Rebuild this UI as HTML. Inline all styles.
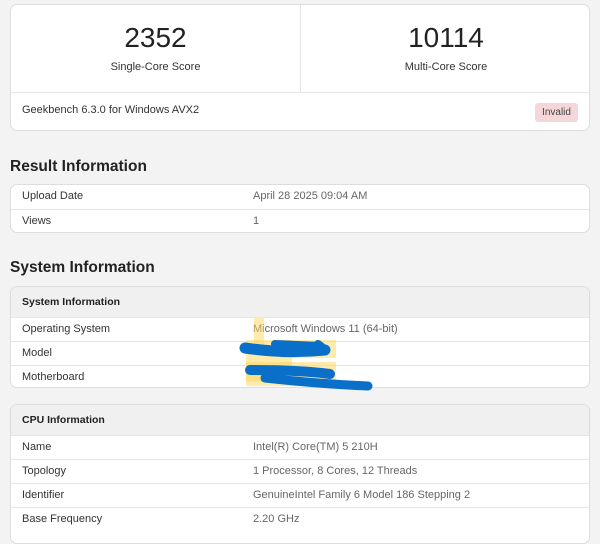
<html><head><style>
body{margin:0;width:600px;height:530px;background:#f3f3f3;font-family:"Liberation Sans",sans-serif;color:#222;position:relative;overflow:hidden}
.a{position:absolute}
.card{position:absolute;left:10px;width:580px;background:#fff;border:1px solid #ddd;border-radius:7px;box-sizing:border-box;overflow:hidden}
.row{position:absolute;left:0;width:100%;height:24px;border-top:1px solid #e6e6e6;font-size:11px;box-sizing:border-box}
.row .l{position:absolute;left:11px;top:5px;color:#333}
.row .v{position:absolute;left:242px;top:5px;color:#666}
.hd{position:absolute;left:0;top:0;width:100%;height:30px;background:#f0f0f0;font-size:10.5px;font-weight:bold}
.hd span{position:absolute;left:11px;top:9px}
h2{position:absolute;left:10px;margin:0;font-size:15.5px;font-weight:bold;color:#222}
</style></head><body>
<div class="card" style="top:4px;height:127px">
 <div class="a" style="left:289px;top:0;width:1px;height:87px;background:#e6e6e6"></div>
 <div class="a" style="left:0;top:87px;width:100%;height:1px;background:#e6e6e6"></div>
 <div class="a" style="left:0;width:289px;top:17px;text-align:center;font-size:28px">2352</div>
 <div class="a" style="left:0;width:289px;top:56px;text-align:center;font-size:11px;color:#333">Single-Core Score</div>
 <div class="a" style="left:290px;width:290px;top:17px;text-align:center;font-size:28px">10114</div>
 <div class="a" style="left:290px;width:290px;top:56px;text-align:center;font-size:11px;color:#333">Multi-Core Score</div>
 <div class="a" style="left:11px;top:99px;font-size:11px;color:#333">Geekbench 6.3.0 for Windows AVX2</div>
 <div class="a" style="left:524px;top:98px;width:43px;height:19px;background:#f5d6d9;border-radius:3px;font-size:10px;color:#444;text-align:center;line-height:19px">Invalid</div>
</div>
<h2 style="top:158px">Result Information</h2>
<div class="card" style="top:184px;height:49px">
 <div class="row" style="top:0;border-top:none"><span class="l">Upload Date</span><span class="v">April 28 2025 09:04 AM</span></div>
 <div class="row" style="top:24px"><span class="l">Views</span><span class="v">1</span></div>
</div>
<h2 style="top:259px">System Information</h2>
<div class="card" style="top:286px;height:102px">
 <div class="hd"><span>System Information</span></div>
 <div class="row" style="top:30px"><span class="l">Operating System</span><span class="v">Microsoft Windows 11 (64-bit)</span></div>
 <div class="row" style="top:54px"><span class="l">Model</span></div>
 <div class="row" style="top:78px"><span class="l">Motherboard</span></div>
</div>
<div class="card" style="top:404px;height:140px">
 <div class="hd"><span>CPU Information</span></div>
 <div class="row" style="top:30px"><span class="l">Name</span><span class="v">Intel(R) Core(TM) 5 210H</span></div>
 <div class="row" style="top:54px"><span class="l">Topology</span><span class="v">1 Processor, 8 Cores, 12 Threads</span></div>
 <div class="row" style="top:78px"><span class="l">Identifier</span><span class="v">GenuineIntel Family 6 Model 186 Stepping 2</span></div>
 <div class="row" style="top:102px"><span class="l">Base Frequency</span><span class="v">2.20 GHz</span></div>
</div>
<svg class="a" style="left:0;top:0" width="600" height="530">
 <g fill="rgba(255,215,90,0.5)">
  <rect x="254" y="318" width="10" height="30"/>
  <rect x="246" y="340" width="46" height="42"/>
  <rect x="280" y="340" width="56" height="18"/>
  <rect x="246" y="362" width="60" height="24"/>
  <rect x="306" y="362" width="30" height="20"/>
 </g>
 <g stroke="#0a6fc9" stroke-linecap="round" fill="none">
  <path d="M245 348 Q285 354 325 350" stroke-width="11"/>
  <path d="M275 344 L320 346" stroke-width="8"/>
  <path d="M318 344 L322 347" stroke-width="8"/>
  <path d="M250 370 Q300 370 330 374" stroke-width="10"/>
  <path d="M265 378 Q320 384 368 386" stroke-width="9"/>
 </g>
</svg>
</body></html>
